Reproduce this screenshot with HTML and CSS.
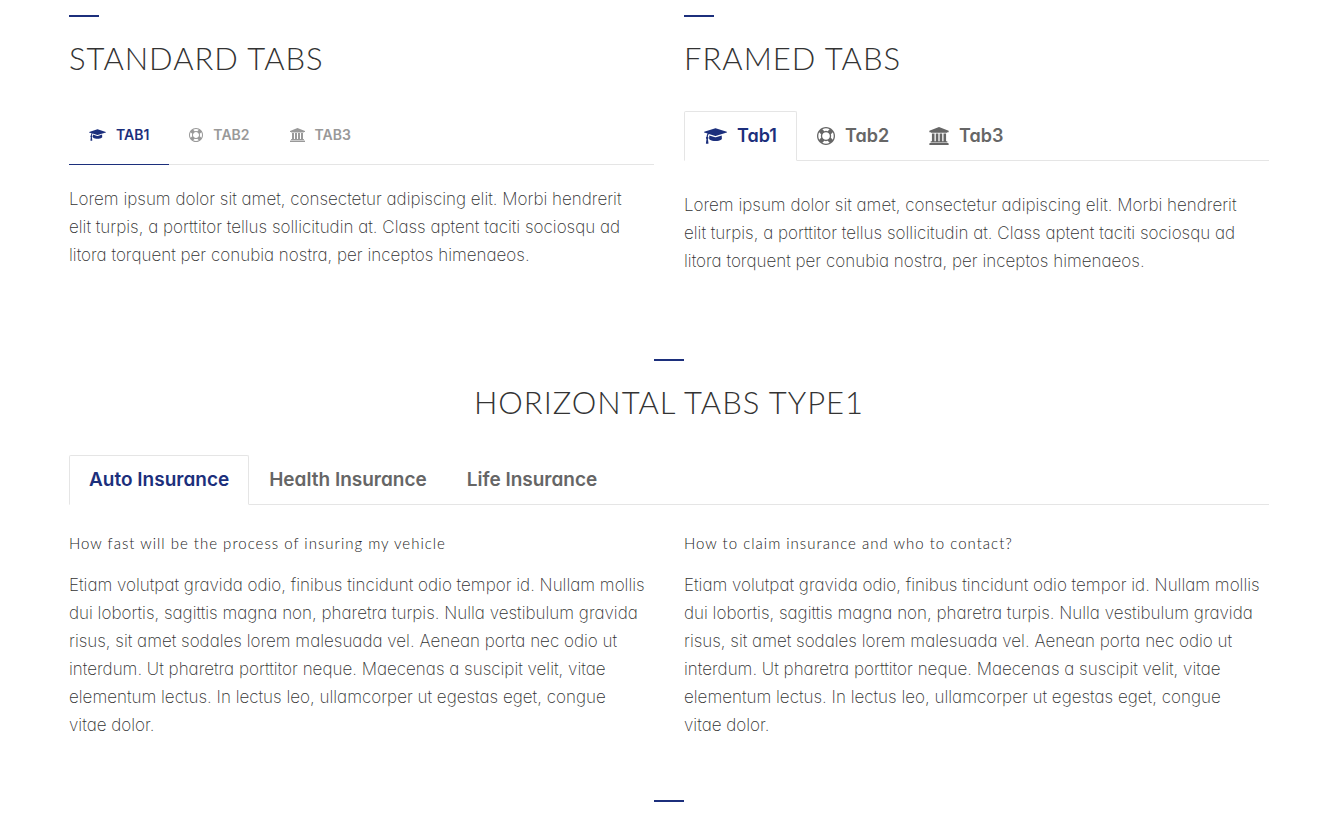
FILE: index.html
```html
<!DOCTYPE html>
<html lang="en">
<head>
    <meta charset="UTF-8">
    <meta name="viewport" content="width=device-width, initial-scale=1.0">
    <title>Tabs</title>
    <link rel="stylesheet" href="styles.css">
</head>
<body>
    <!-- icon shapes shared by both tab bars -->
    <svg class="icon-defs" aria-hidden="true">
        <symbol id="icon-cap" viewBox="0 0 2304 1792">
            <path d="M1774 836l18 316q4 69-82 128t-235 93.500-323 34.500-323-34.500-235-93.500-82-128l18-316 574 181q22 7 48 7t48-7zm530-324q0 23-22 31l-1120 352q-4 1-10 1t-10-1l-652-206q-43 34-71 111.500t-34 178.500q63 36 63 109 0 69-58 107l58 433q2 14-8 25-9 11-24 11h-192q-15 0-24-11-10-11-8-25l58-433q-58-38-58-107 0-73 65-111 11-207 98-330l-333-104q-22-8-22-31t22-31l1120-352q4-1 10-1t10 1l1120 352q22 8 22 31z"/>
        </symbol>
        <symbol id="icon-ring" viewBox="0 0 1792 1792">
            <path d="M896 0q182 0 348 71t286 191 191 286 71 348-71 348-191 286-286 191-348 71-348-71-286-191-191-286-71-348 71-348 191-286 286-191 348-71zm0 128q-190 0-361 90l194 194q82-28 167-28t167 28l194-194q-171-90-361-90zm-678 1129l194-194q-28-82-28-167t28-167l-194-194q-90 171-90 361t90 361zm678 407q190 0 361-90l-194-194q-82 28-167 28t-167-28l-194 194q171 90 361 90zm0-384q159 0 271.500-112.500t112.500-271.500-112.500-271.500-271.500-112.500-271.500 112.500-112.500 271.500 112.500 271.500 271.500 112.500zm484-217l194 194q90-171 90-361t-90-361l-194 194q28 82 28 167t-28 167z"/>
        </symbol>
        <symbol id="icon-bank" viewBox="0 0 1920 1792">
            <path d="M960 0l960 384v128h-128q0 26-20.500 45t-48.500 19h-1526q-28 0-48.500-19t-20.500-45h-128v-128zm-704 640h256v768h128v-768h256v768h128v-768h256v768h128v-768h256v768h59q28 0 48.500 19t20.500 45v64h-1664v-64q0-26 20.500-45t48.500-19h59v-768zm1595 960q28 0 48.500 19t20.500 45v128h-1920v-128q0-26 20.500-45t48.500-19h1782z"/>
        </symbol>
    </svg>

    <main class="container">
        <div class="row">
            <section>
                <h2 class="title">Standard Tabs</h2>
                <nav class="tabs tabs-standard">
                    <a href="#tab1" class="active"><svg class="icon icon-wide"><use href="#icon-cap"/></svg>Tab1</a>
                    <a href="#tab2"><svg class="icon"><use href="#icon-ring"/></svg>Tab2</a>
                    <a href="#tab3"><svg class="icon icon-mid"><use href="#icon-bank"/></svg>Tab3</a>
                </nav>
                <p id="tab1">Lorem ipsum dolor sit amet, consectetur adipiscing elit. Morbi hendrerit<br> elit turpis, a porttitor tellus sollicitudin at. Class aptent taciti sociosqu ad<br> litora torquent per conubia nostra, per inceptos himenaeos.</p>
            </section>
            <section>
                <h2 class="title">Framed Tabs</h2>
                <nav class="tabs tabs-framed">
                    <a href="#framed1" class="active"><svg class="icon icon-wide"><use href="#icon-cap"/></svg>Tab1</a>
                    <a href="#framed2"><svg class="icon"><use href="#icon-ring"/></svg>Tab2</a>
                    <a href="#framed3"><svg class="icon icon-mid"><use href="#icon-bank"/></svg>Tab3</a>
                </nav>
                <p id="framed1">Lorem ipsum dolor sit amet, consectetur adipiscing elit. Morbi hendrerit<br> elit turpis, a porttitor tellus sollicitudin at. Class aptent taciti sociosqu ad<br> litora torquent per conubia nostra, per inceptos himenaeos.</p>
            </section>
        </div>

        <section class="horizontal">
            <h2 class="title title-center">Horizontal Tabs Type1</h2>
            <nav class="tabs tabs-framed tabs-text">
                <a href="#auto" class="active">Auto Insurance</a>
                <a href="#health">Health Insurance</a>
                <a href="#life">Life Insurance</a>
            </nav>
            <div class="row" id="auto">
                <article>
                    <h3>How fast will be the process of insuring my vehicle</h3>
                    <p>Etiam volutpat gravida odio, finibus tincidunt odio tempor id. Nullam mollis dui lobortis, sagittis magna non, pharetra turpis. Nulla vestibulum gravida risus, sit amet sodales lorem malesuada vel. Aenean porta nec odio ut interdum. Ut pharetra porttitor neque. Maecenas a suscipit velit, vitae elementum lectus. In lectus leo, ullamcorper ut egestas eget, congue<br> vitae dolor.</p>
                </article>
                <article>
                    <h3>How to claim insurance and who to contact?</h3>
                    <p>Etiam volutpat gravida odio, finibus tincidunt odio tempor id. Nullam mollis dui lobortis, sagittis magna non, pharetra turpis. Nulla vestibulum gravida risus, sit amet sodales lorem malesuada vel. Aenean porta nec odio ut interdum. Ut pharetra porttitor neque. Maecenas a suscipit velit, vitae elementum lectus. In lectus leo, ullamcorper ut egestas eget, congue<br> vitae dolor.</p>
                </article>
            </div>
        </section>

        <div class="divider"></div>
    </main>
</body>
</html>
```
FILE: styles.css
```css
* {
    box-sizing: border-box;
}
body {
    margin: 0;
    background-color: #fff;
    color: #333;
    font-family: Inter, sans-serif;
    font-feature-settings: "cv11";
    font-size: 17px;
    font-weight: 200;
    line-height: 28px;
}
.icon-defs {
    display: none;
}
.container {
    padding: 15px 63px 18px 69px;
}
.row {
    display: grid;
    grid-template-columns: 1fr 1fr;
    gap: 30px;
}
p {
    margin: 0;
}
.title {
    margin: 0 0 35px;
    color: #333;
    font-family: Lato, sans-serif;
    font-size: 31px;
    font-weight: 300;
    line-height: 36px;
    letter-spacing: 1px;
    text-transform: uppercase;
}
.title::before,
.divider {
    content: "";
    display: block;
    width: 30px;
    height: 2px;
    background-color: #1c2f7c;
}
.title::before {
    margin-bottom: 23px;
}
.title-center {
    text-align: center;
}
.title-center::before,
.divider {
    margin-left: auto;
    margin-right: auto;
}
h3 {
    margin: 0 0 20px;
    color: #222;
    font-family: Lato, sans-serif;
    font-size: 15px;
    font-weight: 300;
    line-height: 16px;
    letter-spacing: 1px;
}

/* Tabs */
.tabs {
    display: flex;
    border-bottom: 1px solid #e5e5e5;
}
.tabs a {
    display: flex;
    align-items: center;
    gap: 10px;
    padding: 0 20px;
    font-weight: 600;
    text-decoration: none;
}
.tabs .active {
    margin-bottom: -1px;
    color: #1c2f7c;
}
.icon {
    width: 18px;
    height: 18px;
    fill: currentColor;
}
.icon-wide {
    width: 23px;
}
.icon-mid {
    width: 20px;
}
.tabs-standard {
    margin-bottom: 20px;
}
.tabs-standard a {
    height: 53px;
    padding-bottom: 6px;
    color: #999;
    font-size: 14px;
    text-transform: uppercase;
}
.tabs-standard .active {
    height: 54px;
    border-bottom: 1px solid #1c2f7c;
}
.tabs-standard .icon {
    width: 14px;
    height: 14px;
}
.tabs-standard .icon-wide {
    width: 17px;
}
.tabs-standard .icon-mid {
    width: 15px;
}
.tabs-framed {
    margin-bottom: 30px;
}
.tabs-framed a {
    height: 49px;
    color: #666;
    font-size: 18px;
}
.tabs-framed .active {
    height: 50px;
    padding: 0 19px;
    border: 1px solid #e5e5e5;
    border-bottom-color: #fff;
    border-radius: 2px 2px 0 0;
    color: #1c2f7c;
}
.tabs-text a {
    font-size: 19px;
}
.horizontal {
    padding: 84px 0 61px;
}
```
